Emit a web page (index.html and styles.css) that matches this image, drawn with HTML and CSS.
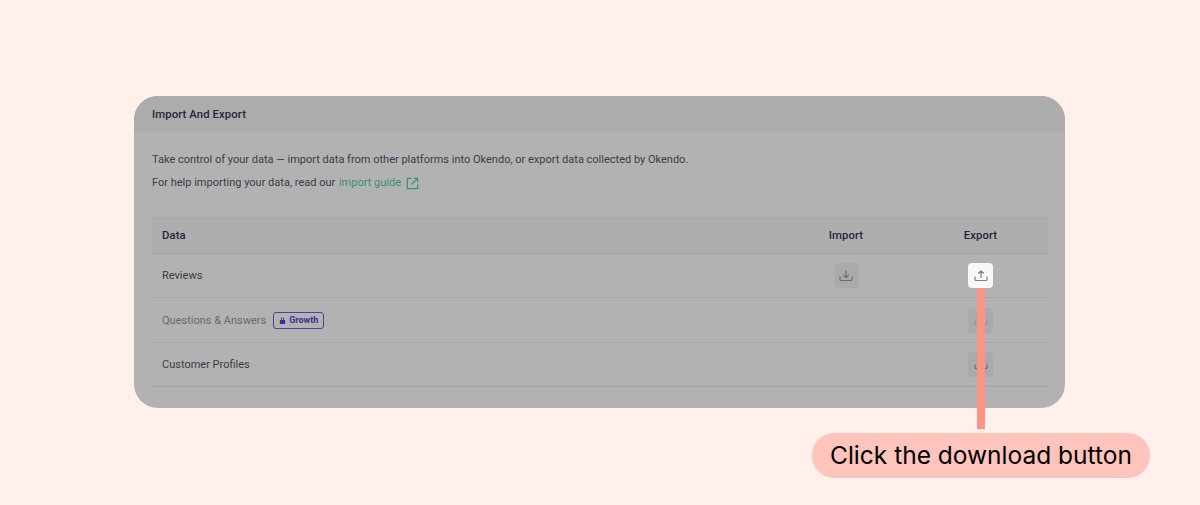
FILE: index.html
```html
<!DOCTYPE html>
<html>
<head>
    <link rel="stylesheet" href="styles.css">
</head>
<body>
    <div class="card">
        <div class="card-header">Import And Export</div>
        <div class="card-body">
            <p class="intro">Take control of your data — import data from other platforms into Okendo, or export data collected by Okendo.</p>
            <p class="intro">For help importing your data, read our <span class="link">import guide</span>
                <svg class="link-icon" viewBox="0 0 14 14" fill="none"><path d="M6 1.500H1.500v11h11V8M8.500 1.500h4V5.500M12.300 1.700 6 8"/></svg>
            </p>

            <div class="data-table">
                <div class="row head">
                    <div>Data</div>
                    <div class="cell-center">Import</div>
                    <div class="cell-center">Export</div>
                </div>
                <div class="row">
                    <div>Reviews</div>
                    <div class="cell-center">
                        <div class="icon-btn"><svg viewBox="0 0 14 14" fill="none"><path d="M1 7.500v3a1 1 0 0 0 1 1h10a1 1 0 0 0 1-1v-3M7 1.500v7M4.200 6 7 8.700 9.800 6"/></svg></div>
                    </div>
                    <div class="cell-center">
                        <div class="icon-btn highlight">
                            <svg viewBox="0 0 14 14" fill="none"><path d="M1 7.500v3a1 1 0 0 0 1 1h10a1 1 0 0 0 1-1v-3M7 9V2M4.200 4.500 7 1.800l2.800 2.700"/></svg>
                            <div class="connector"></div>
                        </div>
                    </div>
                </div>
                <div class="row">
                    <div class="locked-name">
                        <span class="muted">Questions &amp; Answers</span>
                        <span class="plan-badge">
                            <svg viewBox="0 0 8 8"><path d="M1 3.500h6V8H1zM2.200 3.500V2.300a1.800 1.800 0 0 1 3.600 0v1.200H5V2.300a1 1 0 0 0-2 0v1.200z"/></svg>
                            Growth
                        </span>
                    </div>
                    <div></div>
                    <div class="cell-center">
                        <div class="icon-btn faded"><svg viewBox="0 0 14 14" fill="none"><path d="M1 7.500v3a1 1 0 0 0 1 1h10a1 1 0 0 0 1-1v-3M7 9V2M4.200 4.500 7 1.800l2.800 2.700"/></svg></div>
                    </div>
                </div>
                <div class="row last">
                    <div>Customer Profiles</div>
                    <div></div>
                    <div class="cell-center">
                        <div class="icon-btn"><svg viewBox="0 0 14 14" fill="none"><path d="M1 7.500v3a1 1 0 0 0 1 1h10a1 1 0 0 0 1-1v-3M7 9V2M4.200 4.500 7 1.800l2.800 2.700"/></svg></div>
                    </div>
                </div>
            </div>
        </div>
    </div>

    <div class="caption">Click the download button</div>
</body>
</html>
```

FILE: styles.css
```css
* {
    box-sizing: border-box;
}

body {
    margin: 0;
    height: 505px;
    overflow: hidden;
    position: relative;
    background: #fff0ec;
    font-family: Roboto, "Liberation Sans", sans-serif;
    color: #3a3c47;
}

.card {
    width: 931px;
    height: 312px;
    margin: 96px 0 0 134px;
    background: #b2b2b2;
    border-radius: 24px;
    font-size: 11px;
}

.card-header {
    height: 36px;
    padding-left: 18px;
    display: flex;
    align-items: center;
    background: #acacac;
    border-radius: 24px 24px 0 0;
    font-size: 11.300px;
    letter-spacing: 0.100px;
    font-weight: 500;
    color: #24263a;
}

.card-body {
    padding: 21px 17px 0 18px;
}

.intro {
    margin: 0 0 9px;
    height: 14px;
    line-height: 14px;
    display: flex;
    align-items: center;
    white-space: pre;
}

.link {
    color: #3f8f70;
    margin-left: 1px;
}

.link-icon {
    width: 13px;
    height: 13px;
    margin-left: 5px;
    stroke: #3f8f70;
    stroke-width: 1.300;
}

/* table */
.data-table {
    margin-top: 27px;
}

.row {
    display: grid;
    grid-template-columns: 1fr 134px 135px;
    align-items: center;
    height: 44.400px;
    padding-left: 10px;
    border-bottom: 1px solid #a9a9a9;
}

.row.head {
    height: 37px;
    background: #aeaeae;
    border-top: 1px solid #a9a9a9;
    border-bottom: 1px solid #a2a2a2;
    font-size: 11.300px;
    letter-spacing: 0.100px;
    font-weight: 500;
    color: #24263a;
}

.row.last {
    border-bottom-color: #a2a2a2;
}

.cell-center {
    display: flex;
    justify-content: center;
}

.icon-btn {
    position: relative;
    width: 25px;
    height: 25px;
    border-radius: 4px;
    background: #aaa;
    display: flex;
    align-items: center;
    justify-content: center;
}

.icon-btn svg {
    width: 14px;
    height: 14px;
    stroke: #6e6e6e;
    stroke-width: 1.200;
}

.icon-btn.faded svg {
    stroke: #949494;
}

.icon-btn.highlight {
    background: #f8f8f8;
}

.icon-btn.highlight svg {
    stroke: #808080;
}

.connector {
    position: absolute;
    top: 100%;
    left: 9px;
    width: 8px;
    height: 141px;
    background: #ff9383;
    z-index: 2;
}

.locked-name {
    display: flex;
    align-items: center;
    gap: 7px;
}

.muted {
    color: #666873;
}

.plan-badge {
    display: flex;
    align-items: center;
    gap: 3px;
    height: 17px;
    padding: 0 5px;
    border: 1px solid #4f3f9f;
    border-radius: 3px;
    font-size: 9px;
    font-weight: 700;
    color: #3f2a9c;
}

.plan-badge svg {
    width: 7px;
    height: 7px;
    fill: #3f2a9c;
}

.caption {
    position: absolute;
    left: 812px;
    top: 433px;
    width: 338px;
    height: 45px;
    border-radius: 22px;
    background: #ffc4bb;
    color: #000;
    font-family: Inter, "Liberation Sans", sans-serif;
    font-size: 24.500px;
    line-height: 45px;
    text-align: center;
}
```
